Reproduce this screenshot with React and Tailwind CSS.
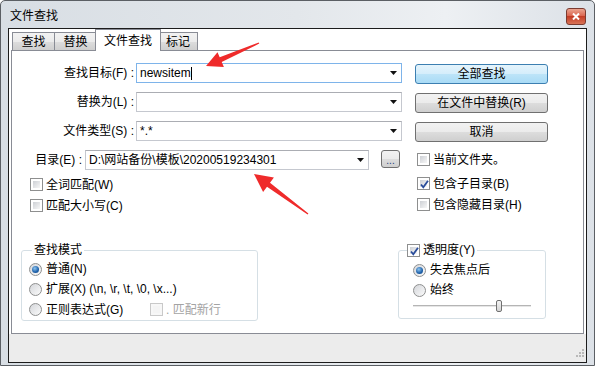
import React from "react";

// Win7 style dialog pieces
const DropArrow = () => (
  <svg width="7" height="4" viewBox="0 0 7 4" className="shrink-0">
    <polygon points="0,0 7,0 3.5,4" fill="#111" />
  </svg>
);

const Combo = ({ value, width, focused, cursor }) => (
  <div
    className={`flex items-center h-[20px] bg-white border ${
      focused ? "border-[#7eb4ea]" : "border-[#c5c8cf] border-t-[#abadb3]"
    } pl-[3px] pr-[4px] ${width}`}
  >
    <span className="flex-1 flex items-center text-[12px] leading-[16px] text-black whitespace-nowrap">
      {value}
      {cursor && <span className="inline-block w-px h-[13px] bg-black" />}
    </span>
    <DropArrow />
  </div>
);

const Button = ({ children, primary }) => (
  <div
    className={`w-[133px] h-[20px] mt-[1px] ml-[13px] rounded-[3px] border flex items-center justify-center text-[12px] leading-[16px] text-black ${
      primary
        ? "border-[#3c7fb1] bg-[linear-gradient(#e5f4fc,#d4edfb_50%,#bde4f8_50%,#a9dbf6)]"
        : "border-[#707070] bg-[linear-gradient(#f2f2f2,#ebebeb_50%,#dddddd_50%,#cfcfcf)]"
    }`}
  >
    {children}
  </div>
);

const Check = ({ checked, disabled, children }) => (
  <div className="flex items-center gap-[3px] h-[21px]">
    <span
      className={`w-[13px] h-[13px] border p-[2px] shrink-0 relative ${
        disabled ? "border-[#c9c9c9] bg-[#f7f7f7]" : "border-[#8e8f8f] bg-white"
      }`}
    >
      <span
        className={`block w-full h-full ${
          disabled ? "bg-[#f4f4f4]" : "bg-linear-to-br from-[#cdd0d5] to-[#f7f7f7]"
        }`}
      />
      {checked && (
        <svg width="11" height="11" viewBox="0 0 11 11" className="absolute left-px top-px">
          <path d="M2 5.5 L4.3 8.3 L9 1.8" stroke="#2a4d9b" strokeWidth="1.8" fill="none" />
        </svg>
      )}
    </span>
    <span
      className={`text-[12px] leading-[16px] whitespace-nowrap ${
        disabled ? "text-[#a3a3a3]" : "text-black"
      }`}
    >
      {children}
    </span>
  </div>
);

const Radio = ({ checked, children }) => (
  <div className="flex items-center gap-[4px] h-[20px]">
    <span className="w-[13px] h-[13px] rounded-full border border-[#8e8f8f] bg-linear-to-br from-[#d4d6da] to-[#fbfbfb] flex items-center justify-center shrink-0">
      {checked && (
        <span className="w-[7px] h-[7px] rounded-full bg-[radial-gradient(circle_at_40%_35%,#8ec5f0,#1c5fa8_60%,#174b86)]" />
      )}
    </span>
    <span className="text-[12px] leading-[16px] text-black whitespace-nowrap">{children}</span>
  </div>
);

const Tab = ({ children, active, width }) =>
  active ? (
    <div
      className={`${width} h-[22px] -mb-px -mx-[2px] z-10 bg-white border border-b-0 border-[#898c95] flex items-center justify-center text-[12px] leading-[16px] text-black`}
    >
      {children}
    </div>
  ) : (
    <div
      className={`${width} h-[18px] border border-b-0 border-[#898c95] bg-[linear-gradient(#f2f2f2,#ebebeb_50%,#dddddd_50%,#cfcfcf)] flex items-center justify-center text-[12px] leading-[16px] text-black -ml-px first:ml-0`}
    >
      {children}
    </div>
  );

const App = () => {
  return (
    <div className="relative w-[595px] h-[366px] border border-[#5b5f64] rounded-t-[5px] bg-[linear-gradient(90deg,#d8dee4,#e3e7eb_50%,#edf0f3_75%,#dce1e7)] font-['Liberation_Sans','Noto_Sans_CJK_SC',sans-serif] overflow-hidden">
      {/* Title bar */}
      <div className="h-[27px] flex items-start justify-between pl-[9px] pr-[8px]">
        <span className="mt-[7px] text-[12px] leading-[16px] text-black">文件查找</span>
        <div className="mt-[7px] w-[20px] h-[17px] rounded-[3px] border border-[#7b3b30] bg-[linear-gradient(#eba48f,#d9604a_50%,#c43d26_50%,#d87356)] flex items-center justify-center">
          <svg width="8" height="7" viewBox="0 0 8 7">
            <path d="M1 0.5 L7 6.5 M7 0.5 L1 6.5" stroke="#fff" strokeWidth="2" />
          </svg>
        </div>
      </div>

      {/* Client frame */}
      <div className="mx-[7px] h-[335px] border border-[#1c1c1c] bg-white flex flex-col">
        <div className="pl-[2px] pr-[2px] flex flex-col">
          {/* Tabs */}
          <div className="h-[21px] flex items-end pl-[1px]">
            <Tab width="w-[43px]">查找</Tab>
            <Tab width="w-[43px]">替换</Tab>
            <Tab width="w-[66px]" active>
              文件查找
            </Tab>
            <Tab width="w-[40px]">标记</Tab>
          </div>

          {/* Panel */}
          <div className="h-[284px] border border-[#898c95] bg-white pt-[12px] flex flex-col">
            <div className="flex flex-col gap-[8px]">
              <div className="flex items-start">
                <span className="w-[122px] text-right text-[12px] leading-[20px] text-black">查找目标(F) :</span>
                <div className="ml-[2px]">
                  <Combo value="newsitem" width="w-[266px]" focused cursor />
                </div>
                <Button primary>全部查找</Button>
              </div>
              <div className="flex items-start">
                <span className="w-[122px] text-right text-[12px] leading-[20px] text-black">替换为(L) :</span>
                <div className="ml-[2px]">
                  <Combo value="" width="w-[266px]" />
                </div>
                <Button>在文件中替换(R)</Button>
              </div>
              <div className="flex items-start">
                <span className="w-[122px] text-right text-[12px] leading-[20px] text-black">文件类型(S) :</span>
                <div className="ml-[2px]">
                  <Combo value="*.*" width="w-[266px]" />
                </div>
                <Button>取消</Button>
              </div>
              <div className="flex items-start">
                <span className="w-[70px] text-right text-[12px] leading-[20px] text-black">目录(E) :</span>
                <div className="ml-[3px]">
                  <Combo value="D:\网站备份\模板\20200519234301" width="w-[284px]" />
                </div>
                <div className="ml-[12px] w-[19px] h-[18px] rounded-[3px] border border-[#707070] bg-[linear-gradient(#f2f2f2,#ebebeb_50%,#dddddd_50%,#cfcfcf)] flex items-end justify-center text-[10px] leading-[12px] text-[#1e3c78]">
                  ...
                </div>
                <div className="ml-[17px] -mt-px">
                  <Check>当前文件夹。</Check>
                </div>
              </div>
            </div>

            {/* Option checkboxes */}
            <div className="flex mt-[3px]">
              <div className="w-[405px] pl-[18px] flex flex-col pt-px">
                <Check>全词匹配(W)</Check>
                <Check>匹配大小写(C)</Check>
              </div>
              <div className="flex flex-col">
                <Check checked>包含子目录(B)</Check>
                <Check>包含隐藏目录(H)</Check>
              </div>
            </div>

            {/* Groups */}
            <div className="flex items-start mt-[26px]">
              <fieldset className="ml-[9px] w-[237px] border border-[#d5dfe5] rounded-[3px] pl-[7px] pt-px">
                <legend className="ml-[3px] px-[2px] text-[12px] leading-[16px] text-black">查找模式</legend>
                <Radio checked>普通(N)</Radio>
                <Radio>{"扩展(X) (\\n, \\r, \\t, \\0, \\x...)"}</Radio>
                <div className="flex items-center">
                  <div className="w-[121px]">
                    <Radio>正则表达式(G)</Radio>
                  </div>
                  <Check disabled>. 匹配新行</Check>
                </div>
              </fieldset>

              <fieldset className="ml-[140px] w-[148px] border border-[#d5dfe5] rounded-[3px] pl-[14px] pt-[2px] pb-[6px]">
                <legend className="-ml-[6px] pr-[2px] h-[16px] flex items-center">
                  <Check checked>透明度(Y)</Check>
                </legend>
                <Radio checked>失去焦点后</Radio>
                <Radio>始终</Radio>
                <div className="relative w-[118px] h-[12px]">
                  <div className="absolute left-0 right-0 top-[5px] h-[3px] border-t border-[#b5b5b5] border-b border-b-white bg-[#e6e6e6]" />
                  <div className="absolute left-[83px] top-0 w-[6px] h-[12px] rounded-[2px] border border-[#707070] bg-linear-to-b from-[#f4f4f4] to-[#d4d4d4]" />
                </div>
              </fieldset>
            </div>
          </div>
        </div>

        {/* Status strip */}
        <div className="flex-1 bg-[#ececec] flex items-end justify-end pr-[1px] pb-[2px]">
          <svg width="11" height="11" viewBox="0 0 11 11">
            <g fill="#b9b9b9">
              <rect x="8" y="0" width="2" height="2" />
              <rect x="5" y="3" width="2" height="2" />
              <rect x="8" y="3" width="2" height="2" />
              <rect x="2" y="6" width="2" height="2" />
              <rect x="5" y="6" width="2" height="2" />
              <rect x="8" y="6" width="2" height="2" />
            </g>
          </svg>
        </div>
      </div>

      {/* Annotation arrows */}
      <svg className="absolute left-0 top-0 pointer-events-none" width="595" height="366">
        <polygon
          points="205,65 216.5,51.3 218.7,56.3 257.7,41.4 258.3,42.6 220.7,60.9 222.9,65.9"
          fill="#ef2b2b"
        />
        <polygon
          points="253,173 272.9,176.5 269,181.7 307.4,212.4 306.6,213.6 266,185.7 262.1,191"
          fill="#ef2b2b"
        />
      </svg>
    </div>
  );
};

export default App;
